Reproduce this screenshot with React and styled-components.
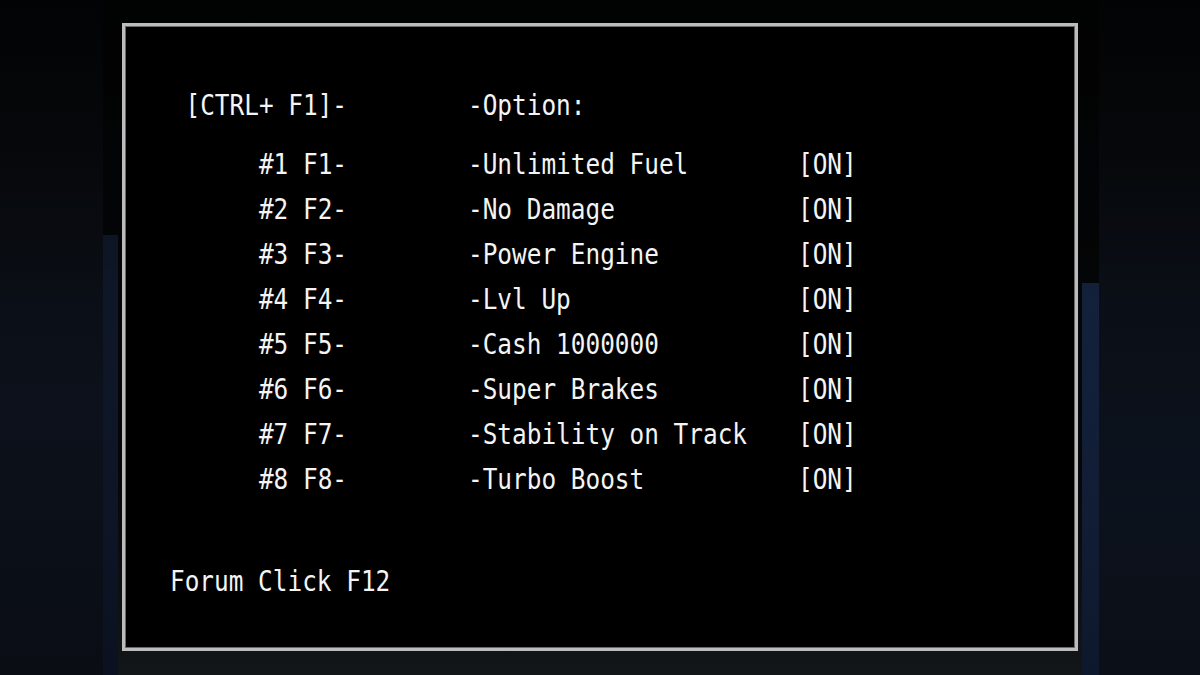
import React from 'react';
import styled, { createGlobalStyle } from 'styled-components';

const GlobalStyle = createGlobalStyle`
  html, body {
    margin: 0;
    padding: 0;
    background: #050608;
  }
  * {
    box-sizing: border-box;
  }
`

const Screen = styled.div`
  width: 100vw;
  height: 100vh;
  overflow: hidden;
  padding: 23px 0 0 122px;
  background:
    linear-gradient(180deg, rgba(0,0,0,0.55) 0, rgba(0,0,0,0) 45%),
    linear-gradient(180deg, #0f1829 0, #0d1527 60%, #0b1120 100%) 103px 235px / 15px 440px no-repeat,
    linear-gradient(180deg, #13213b 0, #111d35 60%, #0e182c 100%) 1082px 283px / 17px 392px no-repeat,
    linear-gradient(180deg, #050608 0, #0a0e15 40%, #0c121d 70%, #0b0f17 100%) 1099px 0 / 101px 675px no-repeat,
    linear-gradient(180deg, #050608 0, #0a0d13 35%, #0c111b 60%, #0a0d14 100%) 0 0 / 103px 675px no-repeat,
    linear-gradient(180deg, #030405 0, #050608 70%, #131619 100%);
`

const Panel = styled.div`
  width: 956px;
  height: 628px;
  background: #000;
  border: 3px solid #bcbcbc;
  box-shadow: inset 0 0 0 1px #6a6a6a;
  padding: 56px 0 0 35px;
  display: flex;
  flex-direction: column;
  font-family: "DejaVu Sans Mono", "Liberation Mono", monospace;
  font-size: 24.4px;
  color: #f4f4f4;
`

const Table = styled.div`
  display: grid;
  grid-template-columns: 308px 330px auto;
  grid-template-rows: 45px 14px repeat(8, 45px);
  align-items: center;
`

const Cell = styled.span`
  display: inline-block;
  white-space: pre;
  line-height: 45px;
  transform: scaleY(1.18);
  text-align: ${p => (p.$right ? 'right' : 'left')};
  padding-right: ${p => (p.$right ? '121px' : '0')};
`

const Spacer = styled.div`
  grid-column: 1 / -1;
`

const Footer = styled.div`
  margin-top: 57px;
  padding-left: 10px;
  line-height: 45px;
  white-space: pre;
  transform: scaleY(1.18);
`

const options = [
  ['#1 F1-', '-Unlimited Fuel'],
  ['#2 F2-', '-No Damage'],
  ['#3 F3-', '-Power Engine'],
  ['#4 F4-', '-Lvl Up'],
  ['#5 F5-', '-Cash 1000000'],
  ['#6 F6-', '-Super Brakes'],
  ['#7 F7-', '-Stability on Track'],
  ['#8 F8-', '-Turbo Boost'],
]

export default function App() {
  return (
    <>
      <GlobalStyle />
      <Screen>
        <Panel>
          <Table>
            <Cell $right>[CTRL+ F1]-</Cell>
            <Cell>-Option:</Cell>
            <Cell />
            <Spacer />
            {options.map(([key, label]) => (
              <React.Fragment key={key}>
                <Cell $right>{key}</Cell>
                <Cell>{label}</Cell>
                <Cell>[ON]</Cell>
              </React.Fragment>
            ))}
          </Table>
          <Footer>Forum Click F12</Footer>
        </Panel>
      </Screen>
    </>
  );
}
